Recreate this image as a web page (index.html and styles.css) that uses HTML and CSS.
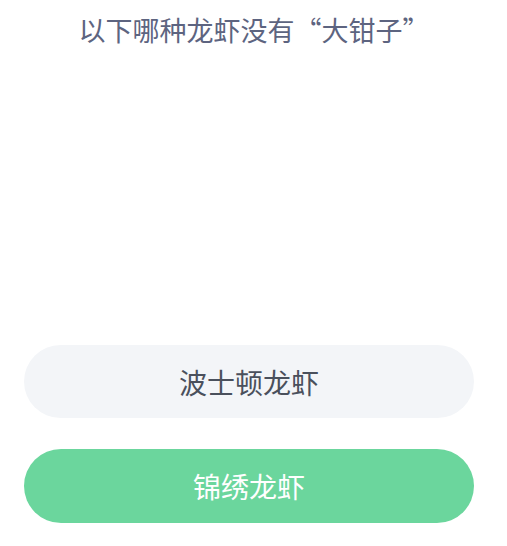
FILE: index.html
```html
<!DOCTYPE html>
<html lang="zh-CN">
<head>
    <meta charset="UTF-8">
    <meta name="viewport" content="width=device-width, initial-scale=1.0">
    <title>每日一题</title>
    <link rel="stylesheet" href="styles.css">
</head>
<body>
    <div class="quiz">
        <h1 class="question">以下哪种龙虾没有“大钳子”</h1>

        <div class="options">
            <div class="option">波士顿龙虾</div>
            <div class="option correct">锦绣龙虾</div>
        </div>
    </div>
</body>
</html>
```

FILE: styles.css
```css
body {
    margin: 0;
    background-color: #ffffff;
    font-family: "Noto Sans CJK SC", "Noto Sans", sans-serif;
}
.quiz {
    width: 450px;
    padding: 0 33px 0 24px;
}
.question {
    margin: 0;
    padding: 13px 0 0 10px;
    font-size: 27px;
    font-weight: normal;
    line-height: 34px;
    color: #5d6480;
    text-align: center;
}
.options {
    display: flex;
    flex-direction: column;
    gap: 31px;
    margin-top: 298px;
}
.option {
    height: 73px;
    border-radius: 37px;
    background-color: #f3f5f8;
    color: #4a505c;
    font-size: 28px;
    display: flex;
    align-items: center;
    justify-content: center;
}
.option.correct {
    height: 74px;
    background-color: #6bd69d;
    color: #ffffff;
}
```
